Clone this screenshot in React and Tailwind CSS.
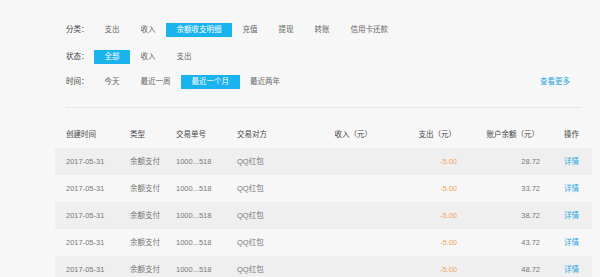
export default function App() {
  const groups = [
    { label: "分类：", items: ["支出", "收入", "余额收支明细", "充值", "提现", "转账", "信用卡还款"], active: 2, mt: "mt-[23px]" },
    { label: "状态：", items: ["全部", "收入", "支出"], active: 0, mt: "mt-[13px]" },
    { label: "时间：", items: ["今天", "最近一周", "最近一个月", "最近两年"], active: 2, mt: "mt-[11px]" },
  ];
  const rows = ["28.72", "33.72", "38.72", "43.72", "48.72"];

  return (
    <div
      className="w-[600px] h-[277px] overflow-hidden bg-[#f7f7f7] text-[7.5px] leading-[14px]"
      style={{ fontFamily: '"Liberation Sans", "Noto Sans CJK SC", sans-serif' }}
    >
      <div className="pl-[66px] pr-[19px]">
        {groups.map((g, gi) => (
          <div key={gi} className={`flex items-center ${g.mt}`}>
            <span className="w-[28px] text-[#444]">{g.label}</span>
            {g.items.map((it, i) => (
              <span
                key={i}
                className={`px-[10.5px] h-[14px] ${
                  i === g.active ? "bg-[#1ab3ee] text-white" : "text-[#666]"
                }`}
              >
                {it}
              </span>
            ))}
            {gi === 2 && (
              <span className="ml-auto mr-[11px] text-[#2aa6e0]">查看更多</span>
            )}
          </div>
        ))}
        <div className="mt-[18px] border-t border-dotted border-[#d8d8d8]" />
      </div>

      <div className="ml-[55px] w-[537px] mt-[20px]">
        <div className="flex h-[14px] items-center text-[#444] pl-[11px]">
          <span className="w-[64px]">创建时间</span>
          <span className="w-[46px]">类型</span>
          <span className="w-[61px]">交易单号</span>
          <span className="w-[63px]">交易对方</span>
          <span className="w-[72px] text-right">收入（元）</span>
          <span className="w-[84px] text-right">支出（元）</span>
          <span className="w-[83px] text-right">账户余额（元）</span>
          <span className="pl-[25px]">操作</span>
        </div>
        <div className="mt-[6px]">
          {rows.map((bal, i) => (
            <div
              key={i}
              className={`flex h-[27px] items-center pl-[11px] text-[#777] ${
                i % 2 === 0 ? "bg-[#efefef]" : ""
              }`}
            >
              <span className="w-[64px]">2017-05-31</span>
              <span className="w-[46px]">余额支付</span>
              <span className="w-[61px]">1000...518</span>
              <span className="w-[63px]">QQ红包</span>
              <span className="w-[72px]" />
              <span className="w-[85px] text-right text-[#f5a35c]">-5.00</span>
              <span className="w-[83px] text-right">{bal}</span>
              <span className="pl-[24px] text-[#2aa6e0]">详情</span>
            </div>
          ))}
        </div>
      </div>
    </div>
  );
}
